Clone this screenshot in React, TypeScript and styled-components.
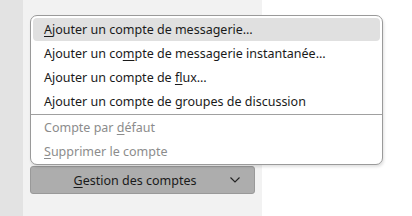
import React from "react";
import styled, { createGlobalStyle } from "styled-components";

const GlobalStyle = createGlobalStyle`
  html, body {
    margin: 0;
    padding: 0;
    background: #ffffff;
  }
  body {
    font-family: "Noto Sans", "Open Sans", sans-serif;
  }
`;

type Item = { before: string; key: string; after: string; disabled?: boolean; active?: boolean };

const items: Item[] = [
  { before: "", key: "A", after: "jouter un compte de messagerie…", active: true },
  { before: "Ajouter un co", key: "m", after: "pte de messagerie instantanée…" },
  { before: "Ajouter un compte de ", key: "f", after: "lux…" },
  { before: "Ajouter un compte de groupes de discussion", key: "", after: "" },
];

const extra: Item[] = [
  { before: "Compte par ", key: "d", after: "éfaut", disabled: true },
  { before: "", key: "S", after: "upprimer le compte", disabled: true },
];

const App = () => {
  return (
    <Screen>
      <GlobalStyle />
      <Rail />
      <Panel>
        <Menu>
          {items.map((it, i) => (
            <MenuItem key={i} $active={it.active}>
              {it.before}
              {it.key && <u>{it.key}</u>}
              {it.after}
            </MenuItem>
          ))}
          <Separator />
          {extra.map((it, i) => (
            <MenuItem key={i} $disabled>
              {it.before}
              <u>{it.key}</u>
              {it.after}
            </MenuItem>
          ))}
        </Menu>
        <Button>
          <ButtonLabel>
            <u>G</u>estion des comptes
          </ButtonLabel>
          <svg width="12" height="8" viewBox="0 0 12 8">
            <path d="M1.5 1.5 L6 6 L10.5 1.5" fill="none" stroke="#222" strokeWidth="1.1" />
          </svg>
        </Button>
      </Panel>
    </Screen>
  );
};

export default App;

const Screen = styled.div`
  width: 412px;
  height: 216px;
  display: flex;
  background: #ffffff;
  overflow: visible;
`;

const Rail = styled.div`
  width: 23px;
  height: 216px;
  background: #e3e3e3;
  flex-shrink: 0;
`;

const Panel = styled.div`
  width: 239px;
  height: 216px;
  background: #f2f2f2;
  flex-shrink: 0;
  padding: 15px 0 0 7px;
  box-sizing: border-box;
  display: flex;
  flex-direction: column;
  gap: 1px;
`;

const Menu = styled.div`
  width: 353px;
  box-sizing: border-box;
  background: #ffffff;
  border: 1px solid #9a9a9a;
  border-radius: 7px;
  padding: 2px 2px 0 2px;
  box-shadow: 1px 2px 3px rgba(0, 0, 0, 0.12);
  position: relative;
  z-index: 1;
`;

const MenuItem = styled.div<{ $active?: boolean; $disabled?: boolean }>`
  height: 23px;
  line-height: 24px;
  margin-bottom: 1px;
  padding-left: 11px;
  font-size: 12.5px;
  color: ${(p) => (p.$disabled ? "#8c8c8c" : "#1a1a1a")};
  background: ${(p) => (p.$active ? "#e0e0e0" : "transparent")};
  border-radius: 4px;
  white-space: nowrap;
  & u {
    text-underline-offset: 2px;
  }
`;

const Separator = styled.div`
  height: 1px;
  background: #a0a0a0;
  margin: 0 -2px 1px -2px;
`;

const Button = styled.div`
  width: 225px;
  height: 28px;
  box-sizing: border-box;
  background: #adadad;
  border: 1px solid #999999;
  border-radius: 3px;
  display: flex;
  align-items: center;
  padding: 0 13px 0 0;
  & svg {
    flex-shrink: 0;
  }
`;

const ButtonLabel = styled.div`
  flex: 1;
  text-align: center;
  font-size: 12.5px;
  color: #1a1a1a;
  padding-left: 10px;
  & u {
    text-underline-offset: 2px;
  }
`;
